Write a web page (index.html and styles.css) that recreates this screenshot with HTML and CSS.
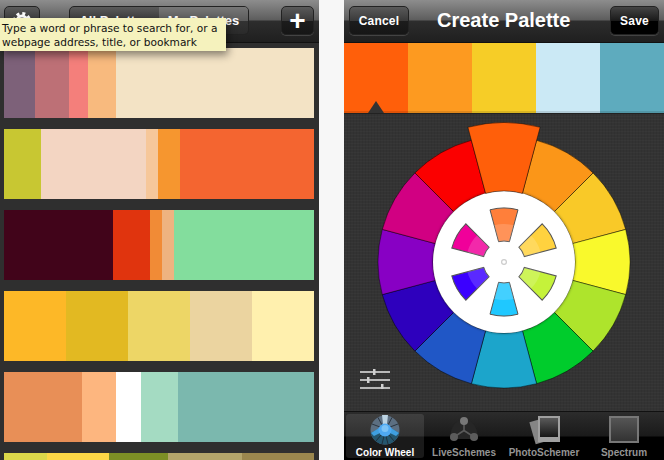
FILE: index.html
```html
<!DOCTYPE html>
<html lang="en">
<head>
  <meta charset="UTF-8" />
  <title>Palettes</title>
  <link rel="stylesheet" href="styles.css">
</head>
<body>

  <!-- palette list -->
  <div class="phone phone-list">
    <div class="navbar">
      <div class="btn btn-gear">
        <svg width="20" height="20" viewBox="0 0 20 20">
          <circle cx="10" cy="10" r="7.5" fill="none" stroke="#fff" stroke-width="3" stroke-dasharray="3 2.9"/>
          <circle cx="10" cy="10" r="5" fill="none" stroke="#fff" stroke-width="3"/>
        </svg>
      </div>
      <div class="segmented">
        <span class="seg seg-on">All Palettes</span>
        <span class="seg">My Palettes</span>
      </div>
      <div class="btn btn-plus">+</div>
    </div>

    <div class="palettes">
      <div class="palette">
        <i style="width:31px;background:#7d6179"></i>
        <i style="width:34px;background:#bd7076"></i>
        <i style="width:19px;background:#f47f7b"></i>
        <i style="width:28px;background:#f8ba7e"></i>
        <i style="width:198px;background:#f3e3c5"></i>
      </div>
      <div class="palette">
        <i style="width:37px;background:#c8c732"></i>
        <i style="width:105px;background:#f3d5c2"></i>
        <i style="width:12px;background:#f6c79a"></i>
        <i style="width:22px;background:#f6962f"></i>
        <i style="width:134px;background:#f46530"></i>
      </div>
      <div class="palette">
        <i style="width:109px;background:#41041a"></i>
        <i style="width:37px;background:#e0340e"></i>
        <i style="width:12px;background:#f18b36"></i>
        <i style="width:12px;background:#eeb380"></i>
        <i style="width:140px;background:#83dd9d"></i>
      </div>
      <div class="palette">
        <i style="width:62px;background:#fdb827"></i>
        <i style="width:62px;background:#e2b922"></i>
        <i style="width:62px;background:#edd666"></i>
        <i style="width:62px;background:#ebd4a0"></i>
        <i style="width:62px;background:#fff0ae"></i>
      </div>
      <div class="palette">
        <i style="width:78px;background:#e88f57"></i>
        <i style="width:34px;background:#fdb67f"></i>
        <i style="width:25px;background:#ffffff"></i>
        <i style="width:37px;background:#a4dbc2"></i>
        <i style="width:136px;background:#7bb8ae"></i>
      </div>
      <div class="palette">
        <i style="width:43px;background:#dcd84a"></i>
        <i style="width:62px;background:#fdd746"></i>
        <i style="width:59px;background:#7d8f25"></i>
        <i style="width:74px;background:#b4a56b"></i>
        <i style="width:72px;background:#9b874e"></i>
      </div>
    </div>

    <div class="tooltip">Type a word or phrase to search for, or a<br>webpage address, title, or bookmark</div>
  </div>

  <!-- create palette -->
  <div class="phone phone-create">
    <div class="navbar">
      <div class="btn btn-text">Cancel</div>
      <div class="title">Create Palette</div>
      <div class="btn btn-text btn-black">Save</div>
    </div>

    <div class="swatches">
      <div class="swatch swatch-on" style="background:#ff5f0a"></div>
      <div class="swatch" style="background:#fd9a20"></div>
      <div class="swatch" style="background:#f6cd27"></div>
      <div class="swatch" style="background:#cbe9f5"></div>
      <div class="swatch" style="background:#5eabbe"></div>
    </div>

    <div class="wheel-panel">
      <svg class="wheel" width="320" height="298" viewBox="0 0 320 298">
        <defs>
          <path id="segment" d="M-32.6 -121.7A126 126 0 0 1 32.6 -121.7L18.4 -68.6A71 71 0 0 0 -18.4 -68.6Z" stroke="#000" stroke-opacity=".55" stroke-width=".8"/>
          <path id="petal" d="M-14 -52.2A54 54 0 0 1 14 -52.2L5.4 -20.3A21 21 0 0 0 -5.4 -20.3Z" stroke="#555" stroke-width="1"/>
          <path id="petal-light" d="M-9.8 -36.7A38 38 0 0 1 9.8 -36.7L5.4 -20.3A21 21 0 0 0 -5.4 -20.3Z" fill="#fff" fill-opacity=".16"/>
          <linearGradient id="photo-inner" x1="0" y1="0" x2="0" y2="1">
            <stop offset="0" stop-color="#5a5a5a"/>
            <stop offset="1" stop-color="#161616"/>
          </linearGradient>
          <filter id="soft" x="-20%" y="-20%" width="140%" height="140%">
            <feDropShadow dx="0" dy="0" stdDeviation="1.5" flood-color="#000" flood-opacity=".6"/>
          </filter>
        </defs>
        <g transform="translate(160 149)">
          <use href="#segment" transform="rotate(30)" fill="#fb9618"/>
          <use href="#segment" transform="rotate(60)" fill="#f9c928"/>
          <use href="#segment" transform="rotate(90)" fill="#f9f92c"/>
          <use href="#segment" transform="rotate(120)" fill="#aee42c"/>
          <use href="#segment" transform="rotate(150)" fill="#00cc2c"/>
          <use href="#segment" transform="rotate(180)" fill="#1ca5cb"/>
          <use href="#segment" transform="rotate(210)" fill="#2057c6"/>
          <use href="#segment" transform="rotate(240)" fill="#2e00bd"/>
          <use href="#segment" transform="rotate(270)" fill="#8800c4"/>
          <use href="#segment" transform="rotate(300)" fill="#d10082"/>
          <use href="#segment" transform="rotate(330)" fill="#fb0000"/>
          <circle r="71" fill="#fff" filter="url(#soft)"/>
          <path d="M-36.1 -134.7A139.5 139.5 0 0 1 36.1 -134.7L18.4 -68.6A71 71 0 0 0 -18.4 -68.6Z" fill="#ff5f0a" stroke="#000" stroke-opacity=".55" stroke-width=".8"/>

          <use href="#petal" fill="#ff7f3a"/>
          <use href="#petal-light"/>
          <use href="#petal" transform="rotate(60)" fill="#ffd23f"/>
          <use href="#petal-light" transform="rotate(60)"/>
          <use href="#petal" transform="rotate(120)" fill="#c5f23a"/>
          <use href="#petal-light" transform="rotate(120)"/>
          <use href="#petal" transform="rotate(180)" fill="#1fc8ff"/>
          <use href="#petal-light" transform="rotate(180)"/>
          <use href="#petal" transform="rotate(240)" fill="#3b00ff"/>
          <use href="#petal-light" transform="rotate(240)"/>
          <use href="#petal" transform="rotate(300)" fill="#f0009a"/>
          <use href="#petal-light" transform="rotate(300)"/>
          <circle r="2.4" fill="#fff" stroke="#ccc" stroke-width="1.2"/>
        </g>
      </svg>
      <svg class="sliders" width="30" height="20" viewBox="0 0 30 20">
        <g fill="#d0d0d0">
          <rect x="0" y="2" width="30" height="2" opacity=".85"/>
          <rect x="0" y="10" width="30" height="2" opacity=".85"/>
          <rect x="0" y="18" width="30" height="2" opacity=".85"/>
          <rect x="13" y="0" width="2.5" height="6"/>
          <rect x="7" y="8" width="2.5" height="6"/>
          <rect x="21" y="15" width="2.5" height="5"/>
        </g>
      </svg>
    </div>

    <div class="tabbar">
      <div class="tab tab-on">
        <svg width="30" height="30" viewBox="-15 -15 30 30">
          <circle r="14.5" fill="#5c6f82"/>
          <path d="M-14.2 3A14.5 14.5 0 0 0 14.2 3L7 -1H-7Z" fill="#24566e"/>
          <path d="M-14 3L-6 -2H6L14 3L11 6L5 3H-5L-11 6Z" fill="#3f9fe0"/>
          <path d="M-3 -15H3L2 -6H-2Z" fill="#bcd3e2"/>
          <g stroke="#1d2630" stroke-width=".8">
            <path d="M-7 -12.5L-3 -5M7 -12.5L3 -5M-13 -6L-5 -3M13 -6L5 -3"/>
            <path d="M-9 11L-4 5M9 11L4 5M-3 14L-1 6M3 14L1 6"/>
          </g>
          <circle r="6.5" fill="#4fa9f2"/>
          <circle cy="-1.5" r="3.5" fill="#7cc3f7"/>
        </svg>
        <span>Color Wheel</span>
      </div>
      <div class="tab">
        <svg width="30" height="30" viewBox="0 0 30 30">
          <path d="M1 24A14 20 0 0 1 29 24Z" fill="#262626"/>
          <path d="M15 6V15.5L5 22M15 15.5L25 22" fill="none" stroke="#5a5a5a" stroke-width="1.6"/>
          <circle cx="15" cy="6" r="4" fill="#777"/>
          <circle cx="5" cy="22" r="4" fill="#5c5c5c"/>
          <circle cx="25" cy="22" r="4" fill="#5c5c5c"/>
        </svg>
        <span>LiveSchemes</span>
      </div>
      <div class="tab">
        <svg width="34" height="30" viewBox="0 0 34 30">
          <rect x="5" y="4" width="21" height="23" fill="#858585" transform="rotate(-16 15 15)"/>
          <rect x="11" y="1" width="22" height="26" fill="#a0a0a0"/>
          <rect x="13" y="3" width="18" height="19" fill="url(#photo-inner)"/>
        </svg>
        <span>PhotoSchemer</span>
      </div>
      <div class="tab">
        <div class="spectrum-icon"></div>
        <span>Spectrum</span>
      </div>
    </div>
  </div>

</body>
</html>
```

FILE: styles.css
```css
* {
  box-sizing: border-box;
  margin: 0;
  padding: 0;
}

body {
  width: 664px;
  height: 460px;
  overflow: hidden;
  display: flex;
  justify-content: space-between;
  background: #f7f7f7;
  font-family: 'Liberation Sans', Arial, sans-serif;
}

.phone {
  position: relative;
  height: 460px;
  overflow: hidden;
  background: #2f2f2f;
}

.phone-list {
  width: 319px;
}

.phone-create {
  width: 320px;
}

.navbar {
  height: 43px;
  display: flex;
  align-items: flex-start;
  justify-content: space-between;
  padding: 6px 5px 0 4px;
  background: linear-gradient(#8d8d8d 0, #5d5d5d 20px, #2d2d2d 21px, #1f1f1f 42px);
  border-bottom: 1px solid #111;
}

.phone-create .navbar {
  padding-left: 5px;
  justify-content: flex-start;
}

.btn {
  height: 29px;
  border-radius: 5px;
  border: 1px solid #222;
  background: linear-gradient(#5a5a5a, #3a3a3a 50%, #1c1c1c 51%, #161616);
  box-shadow: 0 1px 0 rgba(255, 255, 255, 0.15);
  color: #fff;
  display: flex;
  align-items: center;
  justify-content: center;
}

.btn-gear {
  width: 36px;
}

.btn-plus {
  width: 33px;
  font-size: 28px;
  font-weight: 700;
  line-height: 1;
}

.btn-text {
  font-size: 12px;
  font-weight: 700;
  padding: 0 10px;
  letter-spacing: 0.2px;
  width: 60px;
}

.btn-black {
  width: 49px;
  margin-left: auto;
  background: linear-gradient(#444, #1a1a1a 50%, #000 51%, #000);
}

.segmented {
  width: 180px;
  height: 29px;
  margin: 0 32px 0 29px;
  display: flex;
  border-radius: 5px;
  border: 1px solid #222;
  overflow: hidden;
  background: linear-gradient(#5a5a5a, #3a3a3a 50%, #1c1c1c 51%, #161616);
}

.seg {
  flex: 1;
  color: #fff;
  font-size: 13px;
  font-weight: 700;
  text-align: center;
  line-height: 27px;
  background: linear-gradient(#777, #5c5c5c 50%, #333 51%, #2a2a2a);
}

.seg-on {
  background: none;
}

.title {
  margin-left: 28px;
  color: #fff;
  font-size: 20px;
  font-weight: 700;
  line-height: 29px;
}

.palettes {
  padding: 5px 5px 0 4px;
}

.palette {
  display: flex;
  height: 70px;
  margin-bottom: 11px;
}

.palette i {
  display: block;
}

.tooltip {
  position: absolute;
  top: 18px;
  left: 0;
  width: 226px;
  height: 33px;
  padding: 3px 2px;
  background: #f5f2bd;
  color: #111;
  font-family: 'DejaVu Sans', sans-serif;
  font-size: 10.6px;
  line-height: 14px;
  white-space: nowrap;
  box-shadow: 2px 4px 8px rgba(0, 0, 0, 0.45);
}

.swatches {
  display: flex;
  height: 70px;
}

.swatch {
  position: relative;
  flex: 1;
  border-bottom: 2px solid rgba(0, 0, 0, 0.12);
}

.swatch-on::after {
  content: '';
  position: absolute;
  left: 24px;
  bottom: -2px;
  border-left: 8px solid transparent;
  border-right: 8px solid transparent;
  border-bottom: 12px solid #333;
}

.wheel-panel {
  position: relative;
  height: 298px;
  background-color: #333;
  background-image:
    repeating-linear-gradient(0deg, rgba(255, 255, 255, 0.02) 0 1px, transparent 1px 3px),
    repeating-linear-gradient(90deg, rgba(0, 0, 0, 0.06) 0 1px, transparent 1px 3px);
  border-top: 1px solid #222;
}

.wheel {
  display: block;
  margin-top: -1px;
}

.sliders {
  position: absolute;
  left: 16px;
  bottom: 22px;
}

.tabbar {
  height: 49px;
  display: flex;
  padding-top: 2px;
  background: linear-gradient(#2c2c2c, #1a1a1a 24px, #000 25px, #000);
  border-top: 1px solid #111;
}

.tab {
  width: 80px;
  height: 44px;
  display: flex;
  flex-direction: column;
  align-items: center;
  justify-content: space-between;
  padding-top: 1px;
  color: #949494;
  font-size: 10px;
  font-weight: 700;
  white-space: nowrap;
}

.tab svg {
  display: block;
}

.tab-on {
  width: 78px;
  margin-left: 2px;
  color: #fff;
  border-radius: 3px;
  background: rgba(255, 255, 255, 0.1);
}

.spectrum-icon {
  width: 30px;
  height: 27px;
  margin-top: 1px;
  border: 2px solid #777;
  background: linear-gradient(#555, #333);
}
```
